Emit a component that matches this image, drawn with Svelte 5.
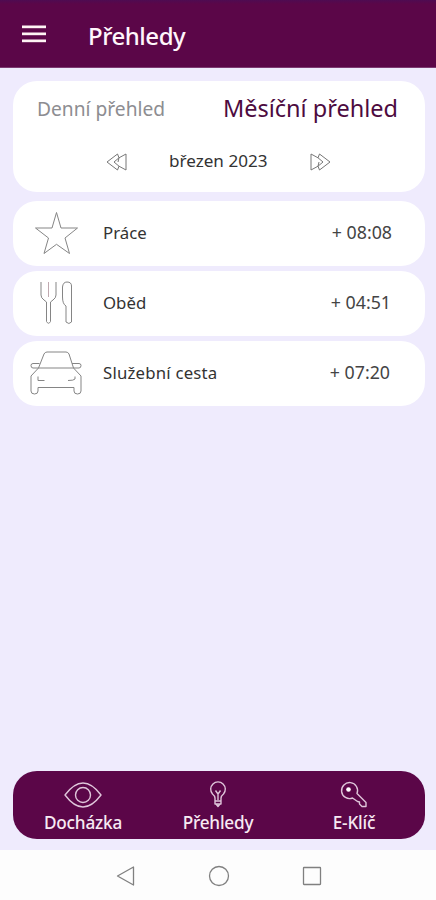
<script>
  const rows = [
    { icon: 'star', label: 'Práce', time: '+ 08:08', inset: 33 },
    { icon: 'meal', label: 'Oběd', time: '+ 04:51', inset: 34 },
    { icon: 'car', label: 'Služební cesta', time: '+ 07:20', inset: 35 }
  ];
</script>

<div class="screen">
  <header>
    <svg class="menu" width="24" height="20" viewBox="0 0 24 20">
      <rect y="1.5" width="24" height="2.7" /><rect y="8.5" width="24" height="2.7" /><rect y="15.5" width="24" height="2.7" />
    </svg>
    <h1>Přehledy</h1>
  </header>

  <main>
    <section class="card period">
      <div class="tabs">
        <span class="daily">Denní přehled</span>
        <span class="monthly">Měsíční přehled</span>
      </div>
      <div class="month">
        <svg width="22" height="18" viewBox="0 0 22 18"><path d="M1 9 11.5 1 13 4.8 20 1V17L13 13.2 11.5 17ZM13 4.8 8 9 13 13.2M13 4.8 12 9" /></svg>
        <span class="current">březen 2023</span>
        <svg width="22" height="18" viewBox="0 0 22 18"><path d="M21 9 10.5 1 9 4.8 2 1V17L9 13.2 10.5 17ZM9 4.8 14 9 9 13.2M9 13.2 10 9" /></svg>
      </div>
    </section>

    {#each rows as row}
      <section class="card row">
        <div class="glyph">
          {#if row.icon === 'star'}
            <svg width="44" height="44" viewBox="0 0 44 44"><path d="M22.5 1.5 27 17H43.5L31 27 35.5 42.5 22.5 33.3 10 42.5 14.5 27 1.5 17H18Z" /></svg>
          {:else if row.icon === 'meal'}
            <svg width="34" height="44" viewBox="0 0 34 44">
              <path d="M2 1V14Q2 17 5 19L7.5 21V40.5Q9.5 44 11.5 40.5V21L14 19Q17 17 17 14V1" />
              <path class="faint" d="M9.5 1V16" />
              <path d="M27 41V25Q23.5 23 23.5 16V6Q24 1 28 1Q32.5 1 32.5 5V41Q30 44 27 41Z" />
            </svg>
          {:else}
            <svg width="52" height="44" viewBox="0 0 52 44">
              <path d="M8.5 17 14 3Q15 1 17 1H36Q38 1 39 3L43.5 17ZM8.5 17 1 25V40Q1 43 4.5 43Q8 43 8 40V36.5H44V40Q44 43 47.5 43Q51 43 51 40V25L43.5 17" />
              <path d="M9.5 12.5H3Q1 12.5 1 14.5Q1 17 3 17H8.5M42 12.5H49Q51 12.5 51 14.5Q51 17 49 17H43.5" />
              <path d="M8 25.5V29.5H14.5M45 25.5V28Q44 29.5 38 29.5" />
            </svg>
          {/if}
        </div>
        <span class="label" class:wide={row.icon === 'car'}>{row.label}</span>
        <span class="time" style:margin-right="{row.inset}px">{row.time}</span>
      </section>
    {/each}

    <nav>
      <div class="item">
        <svg width="38" height="28" viewBox="0 0 38 28"><path d="M1 14Q19-10 37 14Q19 38 1 14Z" /><circle cx="19" cy="14" r="7.5" /></svg>
        <span>Docházka</span>
      </div>
      <div class="item">
        <svg width="18" height="28" viewBox="0 0 18 28"><path d="M6 20V17Q6 15 3.5 13A7.3 7.3 0 1 1 14.5 13Q12 15 12 17V20ZM6 20V23H12V20M7 23 9 25.5 11 23M9 19V13L6.5 9.5M9 13 11.5 9.5" /></svg>
        <span>Přehledy</span>
      </div>
      <div class="item">
        <svg width="28" height="28" viewBox="0 0 28 28"><path d="M12.5 17A8 8 0 1 1 17 12.5L26 21.5V25.5H22L19.5 23V21L17.5 20.5Z" /><circle cx="8.5" cy="8.5" r="2.3" class="hole" /></svg>
        <span>E-Klíč</span>
      </div>
    </nav>
  </main>

  <footer>
    <svg width="20" height="22" viewBox="0 0 20 22"><path d="M2.5 11 18.5 2V20Z" /></svg>
    <svg width="22" height="22" viewBox="0 0 22 22"><circle cx="11" cy="11" r="9.5" /></svg>
    <svg width="20" height="22" viewBox="0 0 20 22"><rect x="1.5" y="2.5" width="17" height="17" rx=".5" /></svg>
  </footer>
</div>

<style>
  :global(body) { margin: 0; }
  .screen {
    width: 436px; height: 900px; display: flex; flex-direction: column; overflow: hidden;
    background: #efebfd; font-family: "Noto Sans", "Open Sans", sans-serif; color: #333;
  }
  svg { display: block; flex: none; fill: none; stroke-linejoin: round; }
  header {
    height: 68px; box-sizing: border-box; padding: 4px 0 0 22px; display: flex; align-items: center;
    background: linear-gradient(#4e0b52 0, #5b0648 4px); border-bottom: 1px solid #7d3b72;
  }
  .menu { fill: #fff4f4; margin-right: 42px; margin-top: -3px; }
  h1 { margin: 0; color: #fff5fb; font-size: 24px; font-weight: 500; line-height: 30px; letter-spacing: -.45px; }
  main { flex: 1; padding: 13px 11px 11px 13px; display: flex; flex-direction: column; }
  .card { background: #fff; border-radius: 24px; flex: none; }
  .period { height: 111px; margin-bottom: 9px; }
  .tabs { height: 54px; padding: 0 27px 0 24px; display: flex; align-items: center; justify-content: space-between; white-space: nowrap; }
  .daily { color: #8d8d91; font-size: 19.2px; }
  .monthly { color: #4d0b40; font-size: 23.5px; }
  .month { height: 54px; padding-left: 93px; display: flex; align-items: center; }
  .month svg { stroke: #777; stroke-width: 1; }
  .current { width: 100px; margin: -3px 40px 0 41px; font-size: 17.1px; white-space: nowrap; }
  .row { height: 65px; margin-bottom: 5px; display: flex; align-items: center; }
  .glyph { width: 90px; box-sizing: border-box; padding: 0 4px 2px 0; display: flex; justify-content: center; }
  .glyph svg { stroke: #858585; stroke-width: 1; }
  .glyph .faint { stroke: #c0a9b0; }
  .label { font-size: 16.8px; margin-top: -3px; white-space: nowrap; }
  .label.wide { letter-spacing: .2px; }
  .time { font-size: 17.8px; margin-left: auto; margin-top: -4px; white-space: nowrap; color: #444; }
  nav {
    margin-top: auto; height: 68px; border-radius: 24px; background: #5b0648; color: #f7e9f3;
    display: grid; grid-template-columns: 140px 130px 142px;
  }
  .item { display: flex; flex-direction: column; align-items: center; padding-top: 10px; font-size: 17.2px; font-weight: 500; line-height: 28px; letter-spacing: -.2px; white-space: nowrap; }
  .item svg { stroke: #dfc5da; stroke-width: 1.4; }
  .item .hole { fill: #fff; stroke: none; }
  footer { height: 50px; padding: 1px 0 0 115px; box-sizing: border-box; background: #fdfdfd; display: flex; align-items: center; }
  footer svg { stroke: #808080; stroke-width: 1.3; }
  footer svg:nth-child(2) { margin: 0 72px 0 73px; }
</style>
